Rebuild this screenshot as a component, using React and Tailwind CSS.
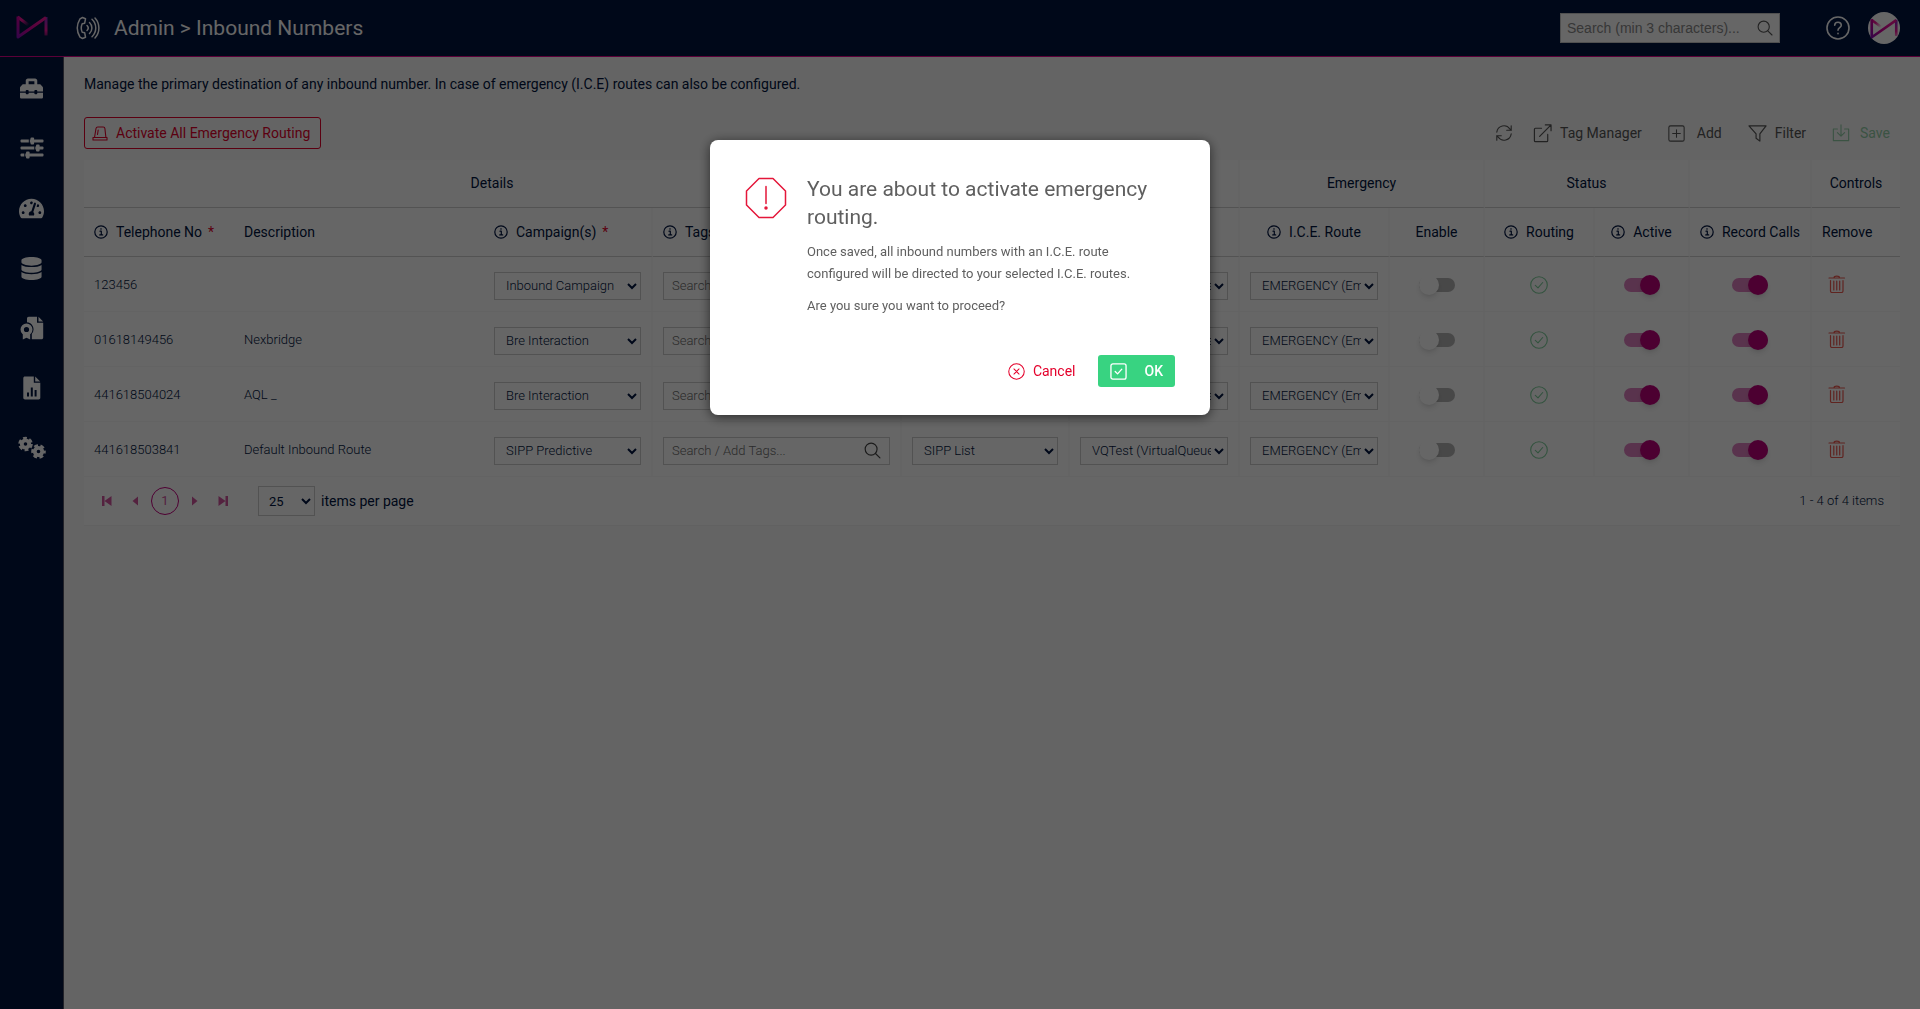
import { useId } from 'react'
import { FaToolbox, FaDatabase, FaTachometerAlt } from 'react-icons/fa'

const rows = [
  { phone: '123456', description: '', campaign: 'Inbound Campaign' },
  { phone: '01618149456', description: 'Nexbridge', campaign: 'Bre Interaction' },
  { phone: '441618504024', description: 'AQL _', campaign: 'Bre Interaction' },
  { phone: '441618503841', description: 'Default Inbound Route', campaign: 'SIPP Predictive' },
]

function Line({ className = 'size-4', box = 20, width = 1.25, children }) {
  return (
    <svg
      viewBox={`0 0 ${box} ${box}`}
      className={`shrink-0 ${className}`}
      fill="none"
      stroke="currentColor"
      strokeWidth={width}
      strokeLinecap="round"
      strokeLinejoin="round"
      aria-hidden="true"
    >
      {children}
    </svg>
  )
}

function Logo({ className }) {
  const id = useId()
  return (
    <svg viewBox="0 0 32 24" className={className} fill="none" strokeWidth="3" aria-hidden="true">
      <defs>
        <linearGradient id={id} gradientUnits="userSpaceOnUse" x1="0" y1="24" x2="24" y2="4">
          <stop offset="0" stopColor="#7a10b8" />
          <stop offset="0.5" stopColor="#d0009a" />
          <stop offset="1" stopColor="#f0149a" />
        </linearGradient>
        <linearGradient id={`${id}l`} gradientUnits="userSpaceOnUse" x1="2" y1="2" x2="13" y2="10">
          <stop offset="0.4" stopColor="#f0149a" />
          <stop offset="1" stopColor="#f0149a" stopOpacity="0" />
        </linearGradient>
        <linearGradient id={`${id}r`} gradientUnits="userSpaceOnUse" x1="0" y1="2" x2="0" y2="21">
          <stop offset="0" stopColor="#7a2fc8" />
          <stop offset="0.7" stopColor="#f0149a" />
          <stop offset="1" stopColor="#f0149a" stopOpacity="0.5" />
        </linearGradient>
      </defs>
      <path d="M1.6 2l11.500 8.500" stroke={`url(#${id}l)`} />
      <path d="M30 2v18.500" stroke={`url(#${id}r)`} />
      <path d="M2 1.500v20.500L30 2.500" stroke={`url(#${id})`} strokeLinejoin="round" />
    </svg>
  )
}

const SlidersIcon = () => (
  <svg viewBox="0 0 24 22" className="w-6 h-[22px]" fill="currentColor" aria-hidden="true">
    <rect x="0.5" y="2.5" width="23" height="3" rx="1" />
    <rect x="10.5" y="0.5" width="3.6" height="7" rx="1" />
    <rect x="0.5" y="9.5" width="23" height="3" rx="1" />
    <rect x="16" y="7.5" width="3.6" height="7" rx="1" />
    <rect x="0.5" y="16.5" width="23" height="3" rx="1" />
    <rect x="6" y="14.5" width="3.6" height="7" rx="1" />
    <path d="M9.300 2v4M4.800 16v4M14.800 9v4" stroke="#001440" strokeWidth="1" />
  </svg>
)

const CertificateIcon = () => (
  <svg viewBox="0 0 24 24" className="size-6" aria-hidden="true">
    <path d="M7 2.500C7 1.400 7.700.7 8.700.7H17v6h6.200v14.800c0 1.100-.7 1.800-1.700 1.800H7z" fill="currentColor" />
    <path d="M18.500.8l4.600 4.600h-4.600z" fill="currentColor" />
    <path d="M6.500 6.300a7 7 0 0 1 5.300 11.500V24H2v-5.200A7 7 0 0 1 6.500 6.300z" fill="#001440" />
    <circle cx="6.500" cy="13.500" r="4.300" stroke="currentColor" strokeWidth="3.400" fill="none" />
    <path d="M2.800 17.500v6l3.700-1.800 3.700 1.800v-6l-3.700 1.600z" fill="currentColor" />
  </svg>
)

const ReportIcon = () => (
  <svg viewBox="0 0 24 24" className="size-6" aria-hidden="true">
    <path d="M5 .5h8.800v6.300h6.500v15c0 1-.7 1.700-1.700 1.700H5c-1 0-1.700-.7-1.700-1.700V2.200C3.300 1.200 4 .5 5 .5z" fill="currentColor" />
    <path d="M15.200.6l5 5h-5z" fill="currentColor" />
    <path d="M8 16.500v4M11.800 11.500v9M15.600 14v6.500" stroke="#001440" strokeWidth="2" />
  </svg>
)

const GearsIcon = () => (
  <svg viewBox="0 0 28 24" className="w-7 h-6" fill="none" stroke="currentColor" aria-hidden="true">
    <circle cx="7.500" cy="8" r="3.700" strokeWidth="3.800" />
    <circle cx="7.500" cy="8" r="6" strokeWidth="2.600" strokeDasharray="3.800 2.483" />
    <circle cx="20.500" cy="15.500" r="3.700" strokeWidth="3.800" />
    <circle cx="20.500" cy="15.500" r="6" strokeWidth="2.600" strokeDasharray="3.800 2.483" strokeDashoffset="1.900" />
  </svg>
)

const menu = [
  { label: 'Toolbox', icon: <FaToolbox className="size-[23px]" /> },
  { label: 'Settings', icon: <SlidersIcon /> },
  { label: 'Dashboard', icon: <FaTachometerAlt className="size-[25px]" /> },
  { label: 'Data', icon: <FaDatabase className="size-[23px]" /> },
  { label: 'Compliance', icon: <CertificateIcon /> },
  { label: 'Reports', icon: <ReportIcon /> },
  { label: 'Admin', icon: <GearsIcon /> },
]

const InfoIcon = () => (
  <Line className="size-3.5" box={14} width={1.2}>
    <circle cx="7" cy="7" r="6.200" />
    <path d="M6 6.200h1.300v3.600M5.700 9.900h3M7 3.700v.5" />
  </Line>
)

const SearchIcon = ({ className }) => (
  <Line className={className} box={16} width={1.1}>
    <circle cx="6.700" cy="6.700" r="5.600" />
    <path d="M10.800 10.800L15 15" />
  </Line>
)

function Th({ children, info, required, center, last }) {
  return (
    <th
      scope="col"
      className={`h-[49px] px-2.5 border-b border-b-[#cfcfcf] font-normal ${last ? '' : 'border-r-2 border-r-[#f9f9f9]'}`}
    >
      <span className={`flex items-center gap-2 whitespace-nowrap ${center ? 'justify-center' : ''}`}>
        {info && <InfoIcon />}
        <span>
          {children}
          {required && <span className="ml-1.5 text-[#e4002b]">*</span>}
        </span>
      </span>
    </th>
  )
}

function GroupTh({ span = 1, last, children }) {
  return (
    <th
      scope="colgroup"
      colSpan={span}
      className={`h-12 border-b border-b-[#cfcfcf] font-normal text-center ${last ? '' : 'border-r-2 border-r-[#f9f9f9]'}`}
    >
      {children}
    </th>
  )
}

function Td({ children, plain, field, center, last }) {
  return (
    <td
      className={`h-[55px] px-2.5 border-b border-b-[#f7f7f7] ${plain || last ? '' : 'border-r-2 border-r-[#f9f9f9]'} ${plain ? 'pt-0.5' : ''} ${field ? 'pt-[3px]' : ''} ${center ? 'text-center' : ''}`}
    >
      {children}
    </td>
  )
}

function Select({ label, value }) {
  return (
    <select
      aria-label={label}
      defaultValue={value}
      className="block w-full h-7 pl-[7px] border border-[#cecece] bg-white text-[13px] text-[#001440]"
    >
      <option>{value}</option>
    </select>
  )
}

function Toggle({ label, on }) {
  return (
    <input
      type="checkbox"
      role="switch"
      aria-label={label}
      defaultChecked={on}
      className="relative inline-block align-middle appearance-none w-9 h-3.5 rounded-full bg-[#b4b4b4] checked:bg-[#df80c0] before:absolute before:-top-[3px] before:left-0 before:size-5 before:rounded-full before:bg-white before:shadow-md checked:before:left-4 checked:before:bg-[#be007c]"
    />
  )
}

function Header() {
  return (
    <header className="flex items-center h-[57px] pl-4 pr-5 bg-[#001440] border-b border-[#e0008c] text-white">
      <Logo className="w-8 h-6 mb-0.5" />
      <Line className="size-6 ml-7" box={24} width={1.5}>
        <path d="M6.500 1.500L4 2.800C.6 8.500.6 15.500 4 21.200l2.500 1.300 3-1.300-.8-4.400-2.500-.5c-1.200-2.700-1.200-5.900 0-8.600l2.500-.5.800-4.400z" />
        <path d="M11 9.500c1.400 1.400 1.400 3.600 0 5M13.500 6.500c3.200 3 3.200 8 0 11M16 3.300c5 4.800 5 12.600 0 17.400M19 2c5.200 5.700 5.200 14.300 0 20" />
      </Line>
      <h1 className="ml-3.5 text-[21px] leading-7">Admin &gt; Inbound Numbers</h1>
      <label className="flex items-center w-[220px] h-[30px] ml-auto px-1.5 border border-[#c8c8c8] bg-white">
        <input
          type="search"
          aria-label="Search"
          placeholder="Search (min 3 characters)..."
          className='flex-1 min-w-0 font-["Liberation_Sans",sans-serif] font-normal text-[14px] text-[#333] placeholder:text-[#8a8a8a] outline-none'
        />
        <SearchIcon className="size-4 text-[#555]" />
      </label>
      <button aria-label="Help" className="ml-[46px]">
        <Line className="size-6" box={24} width={1.6}>
          <circle cx="12" cy="12" r="11" />
          <path d="M8.700 9.300c0-4 6.600-4 6.600 0 0 2.400-3.300 2.400-3.300 5M12 17.300v.4" />
        </Line>
      </button>
      <button aria-label="Account" className="flex items-center justify-center size-8 ml-[18px] rounded-full bg-white">
        <Logo className="w-7 h-[21px]" />
      </button>
    </header>
  )
}

function Sidebar() {
  return (
    <nav className="flex flex-col w-16 shrink-0 pt-px bg-[#001440] border-r border-[#556] text-white">
      {menu.map(m => (
        <a key={m.label} href="#" aria-label={m.label} className="flex items-center justify-center h-[60px]">
          {m.icon}
        </a>
      ))}
    </nav>
  )
}

function Toolbar() {
  return (
    <div className="flex items-center mt-[23px] text-[14px] text-[#555]">
      <button className="flex items-center gap-2 h-8 pl-[7px] pr-2.5 border border-[#e4002b] rounded-[3px] text-[#e4002b]">
        <Line className="size-4" box={16} width={1.1}>
          <path d="M1 12.500h14v2.500H1zM2.500 12.500L4 3.500C4.200 2.300 4.800 2 5.800 2h5.400c1 0 1.600.3 1.700 1.500l1 9M5.500 9.500L6.200 5" />
        </Line>
        Activate All Emergency Routing
      </button>
      <div className="flex items-center gap-[26px] ml-auto pr-2.5">
        <div className="flex items-center gap-5">
          <button aria-label="Refresh">
            <Line className="size-[18px]">
              <path d="M2 9a8 8 0 0 1 14.500-3.500L18 7M18 2v5h-5M18 11a8 8 0 0 1-14.500 3.500L2 13M2 18v-5h5" />
            </Line>
          </button>
          <button className="flex items-center gap-2">
            <Line className="size-[19px]">
              <path d="M9 4.500H2.500A1 1 0 0 0 1.500 5.500v12a1 1 0 0 0 1 1h12a1 1 0 0 0 1-1V11M13 1h6v6M19 1L7 13" />
            </Line>
            Tag Manager
          </button>
        </div>
        <button className="flex items-center gap-3">
          <Line className="size-[17px]">
            <rect x="1" y="1" width="18" height="18" rx="2" />
            <path d="M10 5.500v9M5.500 10h9" />
          </Line>
          Add
        </button>
        <button className="flex items-center gap-2">
          <Line className="size-[19px]">
            <path d="M1 2h18l-6.500 8.500V18l-4-3v-4.500z" />
          </Line>
          Filter
        </button>
        <button disabled className="flex items-center gap-2.5 text-[#93cfa8]">
          <Line className="size-[18px]">
            <path d="M6 5.500H1.500v13h17v-13H14M10 1v12M6 9.500l4 4 4-4" />
          </Line>
          Save
        </button>
      </div>
    </div>
  )
}

function NumbersTable() {
  return (
    <table className="w-full mt-[11px] table-fixed border-separate border-spacing-0 bg-white text-left text-[#001440]">
      <colgroup>
        <col className="w-[150px]" />
        <col />
        <col className="w-[169px]" />
        <col className="w-[249px]" />
        <col className="w-[168px]" />
        <col className="w-[170px]" />
        <col className="w-[150px]" />
        <col className="w-[95px]" />
        <col className="w-[110px]" />
        <col className="w-[95px]" />
        <col className="w-[122px]" />
        <col className="w-[88px]" />
      </colgroup>
      <thead className="text-[14px]">
        <tr>
          <GroupTh span={4}>Details</GroupTh>
          <GroupTh span={2} />
          <GroupTh span={2}>Emergency</GroupTh>
          <GroupTh span={2}>Status</GroupTh>
          <GroupTh />
          <GroupTh last>Controls</GroupTh>
        </tr>
        <tr>
          <Th info required last>Telephone No</Th>
          <Th last>Description</Th>
          <Th info required>Campaign(s)</Th>
          <Th info>Tags</Th>
          <Th />
          <Th />
          <Th info center>I.C.E. Route</Th>
          <Th center>Enable</Th>
          <Th info center>Routing</Th>
          <Th info center>Active</Th>
          <Th info center>Record Calls</Th>
          <Th last>Remove</Th>
        </tr>
      </thead>
      <tbody className="text-[13px] font-light">
        {rows.map(r => (
          <tr key={r.phone}>
            <Td plain>{r.phone}</Td>
            <Td plain>{r.description}</Td>
            <Td field><Select label="Campaign" value={r.campaign} /></Td>
            <Td field>
              <label className="flex items-center h-7 px-2 border border-[#cecece]">
                <input
                  aria-label="Tags"
                  placeholder="Search / Add Tags..."
                  className="flex-1 min-w-0 outline-none placeholder:text-[#6c6c6c]"
                />
                <SearchIcon className="size-[17px] text-[#444]" />
              </label>
            </Td>
            <Td field><Select label="List" value="SIPP List" /></Td>
            <Td field><Select label="Route" value="VQTest (VirtualQueue)" /></Td>
            <Td field><Select label="I.C.E. route" value="EMERGENCY (Emergency)" /></Td>
            <Td center><Toggle label="Enable emergency" /></Td>
            <Td center>
              <Line className="inline size-[18px] text-[#7fcf9c]" box={18} width={1.1}>
                <circle cx="9" cy="9" r="8.300" />
                <path d="M5.300 9.300L8 11.800l4.700-5.300" />
              </Line>
            </Td>
            <Td center><Toggle label="Active" on /></Td>
            <Td center><Toggle label="Record calls" on /></Td>
            <Td last>
              <button aria-label="Remove" className="block ml-1.5 text-[#ee5a52]">
                <Line className="size-[18px]" box={18} width={1.2}>
                  <path d="M1 3h15.500M6 2.700c0-2.200 5.500-2.200 5.500 0M2.500 5.500v10.500c0 1 .5 1.500 1.500 1.500h9.500c1 0 1.500-.5 1.500-1.500V5.500M5.800 6v9M8.750 6v9M11.700 6v9" />
                </Line>
              </button>
            </Td>
          </tr>
        ))}
      </tbody>
    </table>
  )
}

function Pager() {
  return (
    <div className="flex items-center h-[49px] pl-[17px] pr-4 bg-white border-b border-[#f3f3f3] text-[14px] text-[#001440]">
      <div className="flex items-center text-[#d2559f]">
        <button aria-label="First page">
          <svg viewBox="0 0 12 12" className="size-3" fill="currentColor"><path d="M1 1h2.500v10H1zM10.500 1v10L3.500 6z" /></svg>
        </button>
        <button aria-label="Previous page" className="ml-4">
          <svg viewBox="0 0 12 12" className="size-3" fill="currentColor"><path d="M9 1.500v9L3.500 6z" /></svg>
        </button>
        <button className="size-7 ml-2.5 rounded-full border border-[#c4007f] text-[13px]">1</button>
        <button aria-label="Next page" className="ml-2.5">
          <svg viewBox="0 0 12 12" className="size-3" fill="currentColor"><path d="M3 1.500v9L8.500 6z" /></svg>
        </button>
        <button aria-label="Last page" className="ml-4">
          <svg viewBox="0 0 12 12" className="size-3" fill="currentColor"><path d="M11 1H8.500v10H11zM1.500 1v10L8.500 6z" /></svg>
        </button>
      </div>
      <label className="flex items-center gap-1.5 ml-[29px]">
        <select defaultValue="25" className="w-[57px] h-[30px] pl-1.5 border border-[#cecece] bg-white text-[13px]">
          <option>25</option>
        </select>
        items per page
      </label>
      <span className="ml-auto text-[13px] font-light">1 - 4 of 4 items</span>
    </div>
  )
}

function ConfirmDialog() {
  return (
    <div className="fixed inset-0 flex items-start justify-center pt-[140px] bg-black/60">
      <div
        role="alertdialog"
        aria-modal="true"
        aria-labelledby="confirm-title"
        className="w-[500px] px-[35px] pt-[35px] pb-7 rounded-lg bg-white shadow-[0_2px_12px_rgba(0,0,0,0.6)] text-[#5f5f5f]"
      >
        <div className="flex gap-5">
          <Line className="size-[42px] mt-0.5 text-[#e4173a]" box={42} width={1.5}>
            <path d="M14 1.500h14L40.500 14v14L28 40.500H14L1.500 28V14zM21 9.500v17" />
            <circle cx="21" cy="31" r="1" fill="currentColor" />
          </Line>
          <div className="pr-5 text-[13px] leading-[22px]">
            <h2 id="confirm-title" className="mb-2.5 text-[21px] leading-7">
              You are about to activate emergency routing.
            </h2>
            <p className="mb-2.5">
              Once saved, all inbound numbers with an I.C.E. route configured will be directed to your selected I.C.E. routes.
            </p>
            <p>Are you sure you want to proceed?</p>
          </div>
        </div>
        <div className="flex items-center justify-end gap-[22px] mt-[38px] text-[14px]">
          <button className="flex items-center gap-2 h-8 text-[#e4002b]">
            <Line className="size-[17px]" box={18} width={1.1}>
              <circle cx="9" cy="9" r="8.200" />
              <path d="M6.300 6.300l5.400 5.400M11.700 6.300l-5.400 5.400" />
            </Line>
            Cancel
          </button>
          <button className="flex items-center gap-[18px] h-8 px-3 rounded-[3px] bg-[#38d381] text-white font-medium">
            <Line className="size-[17px]" box={18} width={1.4}>
              <rect x="1" y="1" width="16" height="16" rx="2" />
              <path d="M5.500 9l2.500 2.500 4.500-5" />
            </Line>
            OK
          </button>
        </div>
      </div>
    </div>
  )
}

export default function App() {
  return (
    <div className='flex flex-col min-h-screen bg-[#fafafa] font-["Roboto",sans-serif] text-[#001440]'>
      <Header />
      <div className="flex flex-1">
        <Sidebar />
        <main className="flex-1 min-w-0 px-5 pt-[17px]">
          <p className="text-[14px] leading-5">
            Manage the primary destination of any inbound number. In case of emergency (I.C.E) routes can also be configured.
          </p>
          <Toolbar />
          <NumbersTable />
          <Pager />
        </main>
      </div>
      <ConfirmDialog />
    </div>
  )
}
